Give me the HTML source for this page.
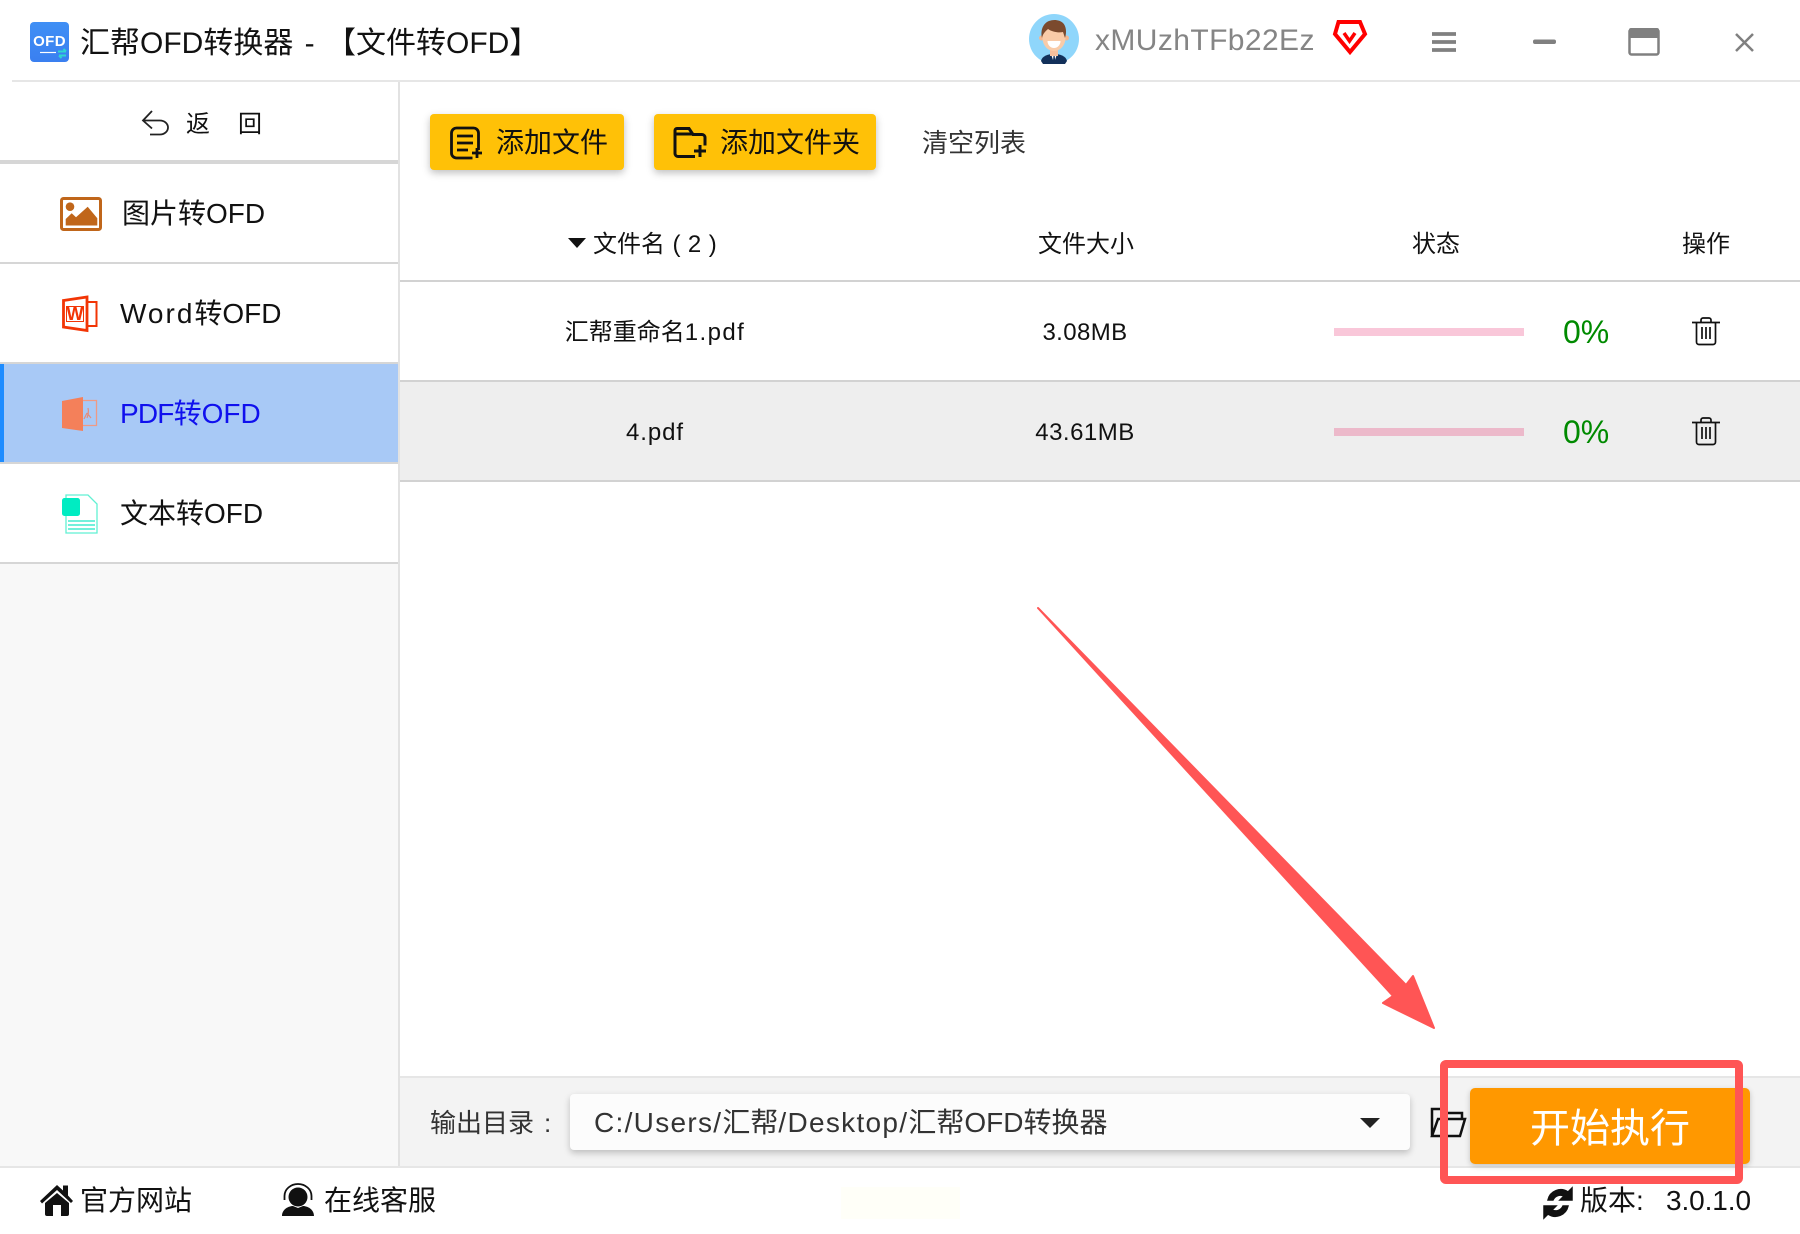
<!DOCTYPE html>
<html lang="zh-CN"><head><meta charset="utf-8"><title>汇帮OFD转换器</title>
<style>
html,body{margin:0;padding:0;width:1800px;height:1234px;overflow:hidden;background:#fff}
body{position:relative;font-family:"Liberation Sans","Noto Sans CJK SC",sans-serif;color:#111}
.b{position:absolute}
.t{position:absolute;white-space:pre;line-height:40px;height:40px}
.c{transform:translateX(-50%)}
</style></head><body>
<!-- backgrounds -->
<div class="b" style="left:12px;top:80px;width:1788px;height:2px;background:#e6e6e6"></div>
<div class="b" style="left:398px;top:82px;width:2px;height:1086px;background:#e2e2e2"></div>
<div class="b" style="left:0;top:160px;width:398px;height:4px;background:#d6d6d6"></div>
<div class="b" style="left:0;top:262px;width:398px;height:2px;background:#d6d6d6"></div>
<div class="b" style="left:0;top:364px;width:398px;height:98px;background:#a8c9f6"></div>
<div class="b" style="left:0;top:364px;width:4px;height:98px;background:#1e8cff"></div>
<div class="b" style="left:0;top:362px;width:398px;height:2px;background:#d6d6d6"></div>
<div class="b" style="left:0;top:462px;width:398px;height:2px;background:#d6d6d6"></div>
<div class="b" style="left:0;top:562px;width:398px;height:2px;background:#d6d6d6"></div>
<div class="b" style="left:0;top:564px;width:398px;height:602px;background:#f8f8f8"></div>
<div class="b" style="left:400px;top:280px;width:1400px;height:2px;background:#d2d2d2"></div>
<div class="b" style="left:400px;top:380px;width:1400px;height:2px;background:#d2d2d2"></div>
<div class="b" style="left:400px;top:382px;width:1400px;height:98px;background:#eeeeee"></div>
<div class="b" style="left:400px;top:480px;width:1400px;height:2px;background:#d2d2d2"></div>
<div class="b" style="left:400px;top:1076px;width:1400px;height:2px;background:#e6e6e6"></div>
<div class="b" style="left:400px;top:1078px;width:1400px;height:88px;background:#f3f3f3"></div>
<div class="b" style="left:0;top:1166px;width:1800px;height:2px;background:#e6e6e6"></div>
<div class="b" style="left:841px;top:1187px;width:119px;height:32px;background:#fffff8"></div>

<!-- toolbar buttons -->
<div class="b" style="left:430px;top:114px;width:194px;height:56px;background:#ffc107;border-radius:4px;box-shadow:0 3px 8px rgba(0,0,0,.25)"></div>
<div class="b" style="left:654px;top:114px;width:222px;height:56px;background:#ffc107;border-radius:4px;box-shadow:0 3px 8px rgba(0,0,0,.25)"></div>
<!-- progress -->
<div class="b" style="left:1334px;top:328px;width:190px;height:8px;background:#f9c7d9"></div>
<div class="b" style="left:1334px;top:428px;width:190px;height:8px;background:#ecb9ca"></div>
<!-- select + start -->
<div class="b" style="left:570px;top:1094px;width:840px;height:56px;background:#fcfcfc;border-radius:4px;box-shadow:0 3px 7px rgba(0,0,0,.22)"></div>
<div class="b" style="left:1470px;top:1088px;width:280px;height:76px;background:#ff9800;border-radius:5px;box-shadow:0 2px 6px rgba(0,0,0,.2)"></div>

<!-- text -->
<div class="t" style="left:80px;top:24px;font-size:30px;color:#111;word-spacing:3px">汇帮OFD转换器 - 【文件转OFD】</div>
<div class="t" style="left:1095px;top:21px;font-size:30px;letter-spacing:.4px;color:#858585">xMUzhTFb22Ez</div>
<div class="t" style="left:186px;top:105px;font-size:24px">返</div>
<div class="t" style="left:238px;top:105px;font-size:24px">回</div>
<div class="t" style="left:122px;top:194px;font-size:28px">图片转OFD</div>
<div class="t" style="left:120px;top:294px;font-size:28px"><span style="letter-spacing:2px">Word</span>转OFD</div>
<div class="t" style="left:120px;top:394px;font-size:28px;color:#1010ee"><span style="letter-spacing:-.8px">PDF</span>转OFD</div>
<div class="t" style="left:120px;top:494px;font-size:28px">文本转OFD</div>
<div class="t" style="left:496px;top:123px;font-size:28px">添加文件</div>
<div class="t" style="left:720px;top:123px;font-size:28px">添加文件夹</div>
<div class="t" style="left:922px;top:123px;font-size:26px;color:#333">清空列表</div>
<div class="t" style="left:593px;top:225px;font-size:24px;word-spacing:.8px">文件名 ( 2 )</div>
<div class="t c" style="left:1086px;top:225px;font-size:24px">文件大小</div>
<div class="t c" style="left:1436px;top:225px;font-size:24px">状态</div>
<div class="t c" style="left:1706px;top:225px;font-size:24px">操作</div>
<div class="t c" style="left:655px;top:313px;font-size:24px">汇帮重命名<span style="letter-spacing:1.4px">1.pdf</span></div>
<div class="t c" style="left:1085px;top:313px;font-size:24px;letter-spacing:.4px">3.08MB</div>
<div class="t" style="left:1563px;top:312px;font-size:32px;color:#008a00">0%</div>
<div class="t c" style="left:655px;top:413px;font-size:24px;letter-spacing:.9px">4.pdf</div>
<div class="t c" style="left:1085px;top:413px;font-size:24px;letter-spacing:.5px">43.61MB</div>
<div class="t" style="left:1563px;top:412px;font-size:32px;color:#008a00">0%</div>
<div class="t" style="left:430px;top:1103px;font-size:26px;color:#333">输出目录<span style="margin-left:10px">:</span></div>
<div class="t" style="left:594px;top:1103px;font-size:28px;color:#333"><span style="letter-spacing:1.300px">C:/Users/</span>汇帮<span style="letter-spacing:1.300px">/Desktop/</span>汇帮OFD转换器</div>
<div class="t" style="left:1530px;top:1109px;font-size:40px;color:#fff">开始执行</div>
<div class="t" style="left:80px;top:1181px;font-size:28px">官方网站</div>
<div class="t" style="left:324px;top:1181px;font-size:28px">在线客服</div>
<div class="t" style="left:1580px;top:1181px;font-size:28px">版本:</div>
<div class="t" style="left:1666px;top:1181px;font-size:28px;letter-spacing:-.1px">3.0.1.0</div>

<!-- icons -->
<svg class="b" style="left:0;top:0" width="1800" height="1234" viewBox="0 0 1800 1234" fill="none">
<defs><linearGradient id="lg" x1="0" y1="0" x2="0" y2="1"><stop offset="0" stop-color="#3f8ff5"/><stop offset="1" stop-color="#3a7ff0"/></linearGradient></defs>
<!-- logo -->
<rect x="30" y="22" width="39" height="40" rx="4" fill="url(#lg)"/>
<text x="49.500" y="46" font-family="Liberation Sans" font-weight="700" font-size="15" fill="#fff" text-anchor="middle" letter-spacing=".4">OFD</text>
<path d="M40 52.500H56" stroke="#fff" stroke-width="1.200"/>
<path d="M58 51.500h8M66 51.500l-2.500-2.500M59 55.500h7M59 55.500l2.500 2.500" stroke="#2fd6d0" stroke-width="2"/>
<!-- avatar -->
<circle cx="1054" cy="39" r="25" fill="#8fd6fb"/>
<path d="M1041 61c1-5 7-7 13-7s12 2 13 7l-2 3h-22z" fill="#12305a"/>
<path d="M1051 54h6l-3 9z" fill="#fff"/><path d="M1053.500 56h1.200l.8 7h-2.800z" fill="#12305a"/>
<rect x="1050" y="47" width="8" height="9" fill="#f5bf9c"/>
<circle cx="1041.500" cy="38" r="2.500" fill="#f2b892"/><circle cx="1066.500" cy="38" r="2.500" fill="#f2b892"/>
<ellipse cx="1054" cy="38" rx="11.500" ry="13" fill="#f9cba8"/>
<path d="M1042 38c-2-9 2-15 7-17 5-2 11-1 14 2 3 3 4 9 2 15l-2-6c-4 1-11 0-15-3-2 2-5 4-6 9z" fill="#7b4a2e"/>
<path d="M1047.500 41h13c0 4-3 7-6.500 7s-6.500-3-6.500-7z" fill="#fff"/>
<!-- vip -->
<path d="M1338.500 22h21.500l5 12-15 18-15-18z" stroke="#f00" stroke-width="4" stroke-linejoin="miter"/>
<path d="M1344 33l5.500 8 5.500-8" stroke="#f00" stroke-width="3.500"/>
<!-- window controls -->
<path d="M1432 34h24M1432 42h24M1432 50h24" stroke="#808080" stroke-width="3.800"/>
<rect x="1533" y="39.500" width="23" height="4.500" rx="2" fill="#808080"/>
<rect x="1629.500" y="29.500" width="29" height="25" rx="2" stroke="#808080" stroke-width="2.500"/>
<rect x="1629" y="28" width="30" height="10" rx="2" fill="#808080"/>
<path d="M1736 34l17 17M1753 34l-17 17" stroke="#808080" stroke-width="2.500"/>
<!-- back -->
<path d="M152 111l-9 9.500 9 8M144 120.500h16a8 7 0 0 1 0 14h-10" stroke="#222" stroke-width="1.800"/>
<!-- image icon -->
<rect x="61.500" y="198.500" width="39" height="31" rx="2" stroke="#c0661a" stroke-width="3"/>
<circle cx="70" cy="206.700" r="4.300" fill="#c0661a"/>
<path d="M65.700 225.500v-6.500l6-5.700 4.300 4 11.700-10.600 9.600 11.600v7.200z" fill="#c0661a"/>
<!-- word -->
<path d="M63.500 300.500L87 297v33.500L63.500 327z" stroke="#f23505" stroke-width="2.800" fill="#fff"/>
<path d="M87 302h9.500v24H87" stroke="#f23505" stroke-width="2"/>
<path d="M66.500 306.500h17v15h-17z" stroke="#f23505" stroke-width="1"/>
<text x="75" y="320" font-family="Liberation Sans" font-weight="700" font-size="18" fill="#f23505" text-anchor="middle">W</text>
<!-- pdf -->
<path d="M62 401l21-4v34l-21-3z" fill="#f4805a"/>
<path d="M83 400.500h13.500v25H83" stroke="#ef9a85" stroke-width="1.300" fill="none"/>
<path d="M87 418c1-3 2-6 1-10M87 413l-3 6M87 413l4 5" stroke="#e58c7a" stroke-width="1.200"/>
<!-- text icon -->
<path d="M66 495h22l9 9v29H66z" stroke="#62f0d3" stroke-width="1.300" fill="#fff"/>
<rect x="62" y="498" width="18" height="18" rx="2.500" fill="#00ecc2"/>
<path d="M68 521h27M68 525h27M68 529h27" stroke="#1fe6c5" stroke-width="1.300"/>
<!-- doc add -->
<path d="M478.500 150v-17a5 5 0 0 0-5-5h-17a5 5 0 0 0-5 5v20a5 5 0 0 0 5 5h16" stroke="#111" stroke-width="2.800"/>
<path d="M457 136h16M457 143h16M457 150h11" stroke="#111" stroke-width="2.800"/>
<path d="M472 153h10M477 148v10" stroke="#111" stroke-width="2.800"/>
<!-- folder add -->
<path d="M695 156.500h-17a3 3 0 0 1-3-3v-23a2 2 0 0 1 2-2h12l4 6h9a3 3 0 0 1 3 3v8M675 134h18" stroke="#111" stroke-width="3"/>
<path d="M694 151h12M700 145v12" stroke="#111" stroke-width="3"/>
<!-- sort + selects -->
<path d="M568 238h18l-9 10z" fill="#111"/>
<path d="M1360 1118h20l-10 10z" fill="#222"/>
<!-- trash -->
<g stroke="#111" stroke-width="1.700">
<path d="M1692 322.500h28M1701 322v-2a2 2 0 0 1 2-2h6a2 2 0 0 1 2 2v2M1696.500 322v20a2.500 2.500 0 0 0 2.500 2.500h14a2.500 2.500 0 0 0 2.500-2.500v-20M1702 327v12M1706 327v12M1710 327v12"/>
</g>
<g stroke="#111" stroke-width="1.700">
<path d="M1692 422.500h28M1701 422v-2a2 2 0 0 1 2-2h6a2 2 0 0 1 2 2v2M1696.500 422v20a2.500 2.500 0 0 0 2.500 2.500h14a2.500 2.500 0 0 0 2.500-2.500v-20M1702 427v12M1706 427v12M1710 427v12"/>
</g>
<!-- open folder -->
<path d="M1432 1136v-27h11l3 4h16v7M1432 1136h28l5-17h-27l-6 17z" stroke="#111" stroke-width="2.500"/>
<!-- footer icons -->
<path d="M40 1201l17-16 6 5.500v-5h5v10l5 5.500-2 2-14-13-15 13.500z" fill="#111"/>
<path d="M45 1203l12-10 12 10v11a2 2 0 0 1-2 2h-6v-11h-8v11h-6a2 2 0 0 1-2-2z" fill="#111"/>
<circle cx="298" cy="1197" r="9.500" fill="#111"/>
<path d="M284.500 1200v-4a13.500 12 0 0 1 27 0v4" stroke="#111" stroke-width="1.800"/>
<path d="M282 1216c0-7 7-10 11-10l5 2 5-2c4 0 11 3 11 10z" fill="#111"/>
<path d="M1548 1201a13 13 0 0 1 20-8l4-4v12h-12l4-4a8 8 0 0 0-11 4z" fill="#111" stroke="#111" stroke-width="1.500" transform="translate(0 -1)"/>
<path d="M1568 1206a13 13 0 0 1-20 8l-4 4v-12h12l-4 4a8 8 0 0 0 11-4z" fill="#111" stroke="#111" stroke-width="1.500"/>
<!-- red annotation -->
<path d="M1038 608L1406 985L1413 976L1434 1028L1383 1003L1393 996Z" fill="#ff5555" stroke="#ff5555" stroke-width="2" stroke-linejoin="round"/>
<rect x="1444" y="1064" width="295" height="116" rx="2" stroke="#ff5555" stroke-width="8"/>
</svg>
</body></html>
